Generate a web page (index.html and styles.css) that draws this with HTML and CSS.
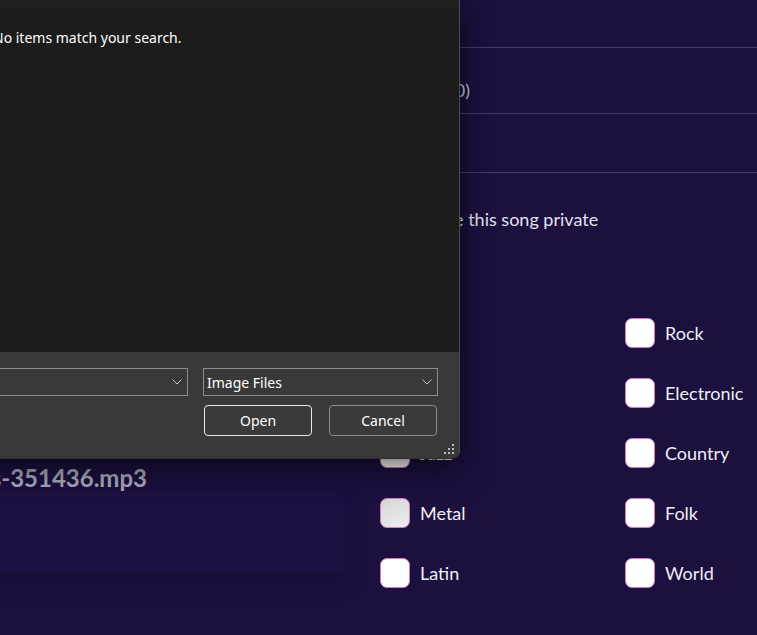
FILE: index.html
```html
<!DOCTYPE html>
<html lang="en">
<head>
<meta charset="utf-8">
<title>Upload song</title>
<link rel="stylesheet" href="styles.css">
</head>
<body>
<div class="page">
  <section class="left">
    <div class="filename-wrap"><span class="filename">summer-vibes-351436.mp3</span></div>
    <div class="card"></div>
  </section>
  <section class="right">
    <div class="row head"></div>
    <div class="row field1"><div class="field-value"><span>Duration (3:30)</span></div></div>
    <div class="row field2"></div>
    <label class="private"><span class="box"></span><span class="lbl">Make this song private</span></label>
    <div class="genres">
      <label class="genre"><span class="box"></span><span class="lbl">Pop</span></label>
      <label class="genre"><span class="box"></span><span class="lbl">Rock</span></label>
      <label class="genre"><span class="box"></span><span class="lbl">R&amp;B</span></label>
      <label class="genre"><span class="box"></span><span class="lbl">Electronic</span></label>
      <label class="genre"><span class="box"></span><span class="lbl">Jazz</span></label>
      <label class="genre"><span class="box"></span><span class="lbl">Country</span></label>
      <label class="genre"><span class="box hover"></span><span class="lbl">Metal</span></label>
      <label class="genre"><span class="box"></span><span class="lbl">Folk</span></label>
      <label class="genre"><span class="box"></span><span class="lbl">Latin</span></label>
      <label class="genre"><span class="box"></span><span class="lbl">World</span></label>
    </div>
  </section>
</div>

<div class="dialog">
  <div class="dlg-top"></div>
  <div class="dlg-body">
    <div class="nav"></div>
    <div class="list">No items match your search.</div>
  </div>
  <div class="dlg-bottom">
    <div class="dlg-row">
      <div class="combo name-combo"><span></span>
        <svg class="chev" width="10" height="6" viewBox="0 0 10 6"><polyline points="0.5,0.5 5,5 9.5,0.5" fill="none" stroke="#c4c4c4" stroke-width="1"/></svg>
      </div>
      <div class="combo type-combo"><span>Image Files</span>
        <svg class="chev" width="10" height="6" viewBox="0 0 10 6"><polyline points="0.5,0.5 5,5 9.5,0.5" fill="none" stroke="#c4c4c4" stroke-width="1"/></svg>
      </div>
    </div>
    <div class="dlg-row buttons">
      <button class="btn primary">Open</button>
      <button class="btn">Cancel</button>
    </div>
    <svg class="grip" width="12" height="12" viewBox="0 0 12 12" fill="#bdbdbd">
      <rect x="8" y="0" width="2" height="2"/>
      <rect x="4" y="4" width="2" height="2"/><rect x="8" y="4" width="2" height="2"/>
      <rect x="0" y="8" width="2" height="2"/><rect x="4" y="8" width="2" height="2"/><rect x="8" y="8" width="2" height="2"/>
    </svg>
  </div>
</div>
</body>
</html>
```
FILE: styles.css
```css
* { box-sizing: border-box; }
html, body { margin: 0; padding: 0; }
body {
  width: 757px;
  height: 635px;
  overflow: hidden;
  position: relative;
  background: #1b103e;
  font-family: Lato, "Noto Sans", sans-serif;
  color: #f0eef6;
}
.page {
  display: grid;
  grid-template-columns: 380px 377px;
  height: 635px;
}
.left {
  padding-top: 463px;
}
.filename-wrap {
  width: 147px;
  display: flex;
  justify-content: flex-end;
  height: 28px;
  align-items: center;
}
.filename {
  white-space: nowrap;
  font-size: 24px;
  font-weight: 700;
  color: #a8a5b8;
}
.card {
  margin-top: 0;
  margin-left: -40px;
  width: 386px;
  height: 82px;
  border-radius: 12px;
  background: #1b1040;
  box-shadow: 0 10px 24px rgba(0, 0, 0, 0.14);
}
.right {
  display: flex;
  flex-direction: column;
}
.row { border-bottom: 1px solid #463a6c; }
.head { height: 48px; }
.field1 {
  height: 66px;
  padding-top: 19px;
  display: flex;
  align-items: center;
}
.field-value {
  width: 90px;
  display: flex;
  justify-content: flex-end;
  white-space: nowrap;
  font-size: 18px;
  color: #cac6d8;
}
.field2 { height: 59px; }
.private {
  height: 92px;
  display: flex;
  align-items: center;
  gap: 10px;
}
.private .lbl { color: #e4e1ee; }
.lbl { font-size: 18px; }
.box {
  width: 30px;
  height: 30px;
  flex: none;
  border: 1.5px solid #d57cc0;
  border-radius: 7px;
  background: #ffffff;
}
.box.hover { background: linear-gradient(160deg, #d6d6d6, #ededed); }
.genres {
  margin-top: 53px;
  display: grid;
  grid-template-columns: 245px 1fr;
  row-gap: 30px;
}
.genre {
  display: flex;
  align-items: center;
  gap: 10px;
  height: 30px;
}

/* Windows file dialog overlay */
.dialog {
  position: absolute;
  top: 0;
  left: -300px;
  width: 760px;
  height: 459px;
  background: #1c1c1c;
  border-right: 1px solid #4c4c4c;
  border-bottom: 1px solid #2e2e2e;
  border-radius: 0 0 8px 0;
  box-shadow: 0 8px 30px rgba(0, 0, 0, 0.6);
  display: flex;
  flex-direction: column;
  overflow: hidden;
  font-family: "Noto Sans", "Liberation Sans", sans-serif;
  color: #ffffff;
}
.dlg-top { height: 8px; background: #212121; flex: none; }
.dlg-body { flex: 1; display: flex; }
.nav { width: 280px; }
.list {
  padding: 20px 0 0 13px;
  font-size: 14px;
  line-height: 20px;
}
.dlg-bottom {
  flex: none;
  height: 106px;
  background: #393939;
  padding: 16px 21px 0 0;
  position: relative;
  display: flex;
  flex-direction: column;
  gap: 9px;
}
.dlg-row {
  display: flex;
  justify-content: flex-end;
  gap: 15px;
}
.combo {
  height: 28px;
  border: 1px solid #8c8c8c;
  display: flex;
  align-items: center;
  justify-content: space-between;
  padding: 0 5px 0 3px;
  font-size: 14px;
}
.name-combo { width: 300px; }
.type-combo { width: 235px; }
.buttons { gap: 17px; padding-right: 1px; }
.btn {
  width: 108px;
  height: 31px;
  border-radius: 4px;
  border: 1px solid #8c8c8c;
  background: #3a3a3a;
  color: #ffffff;
  font-family: "Noto Sans", "Liberation Sans", sans-serif;
  font-size: 14px;
  padding: 0;
}
.btn.primary { border-color: #e8e8e8; }
.grip {
  position: absolute;
  right: 3px;
  bottom: 2px;
}
```
